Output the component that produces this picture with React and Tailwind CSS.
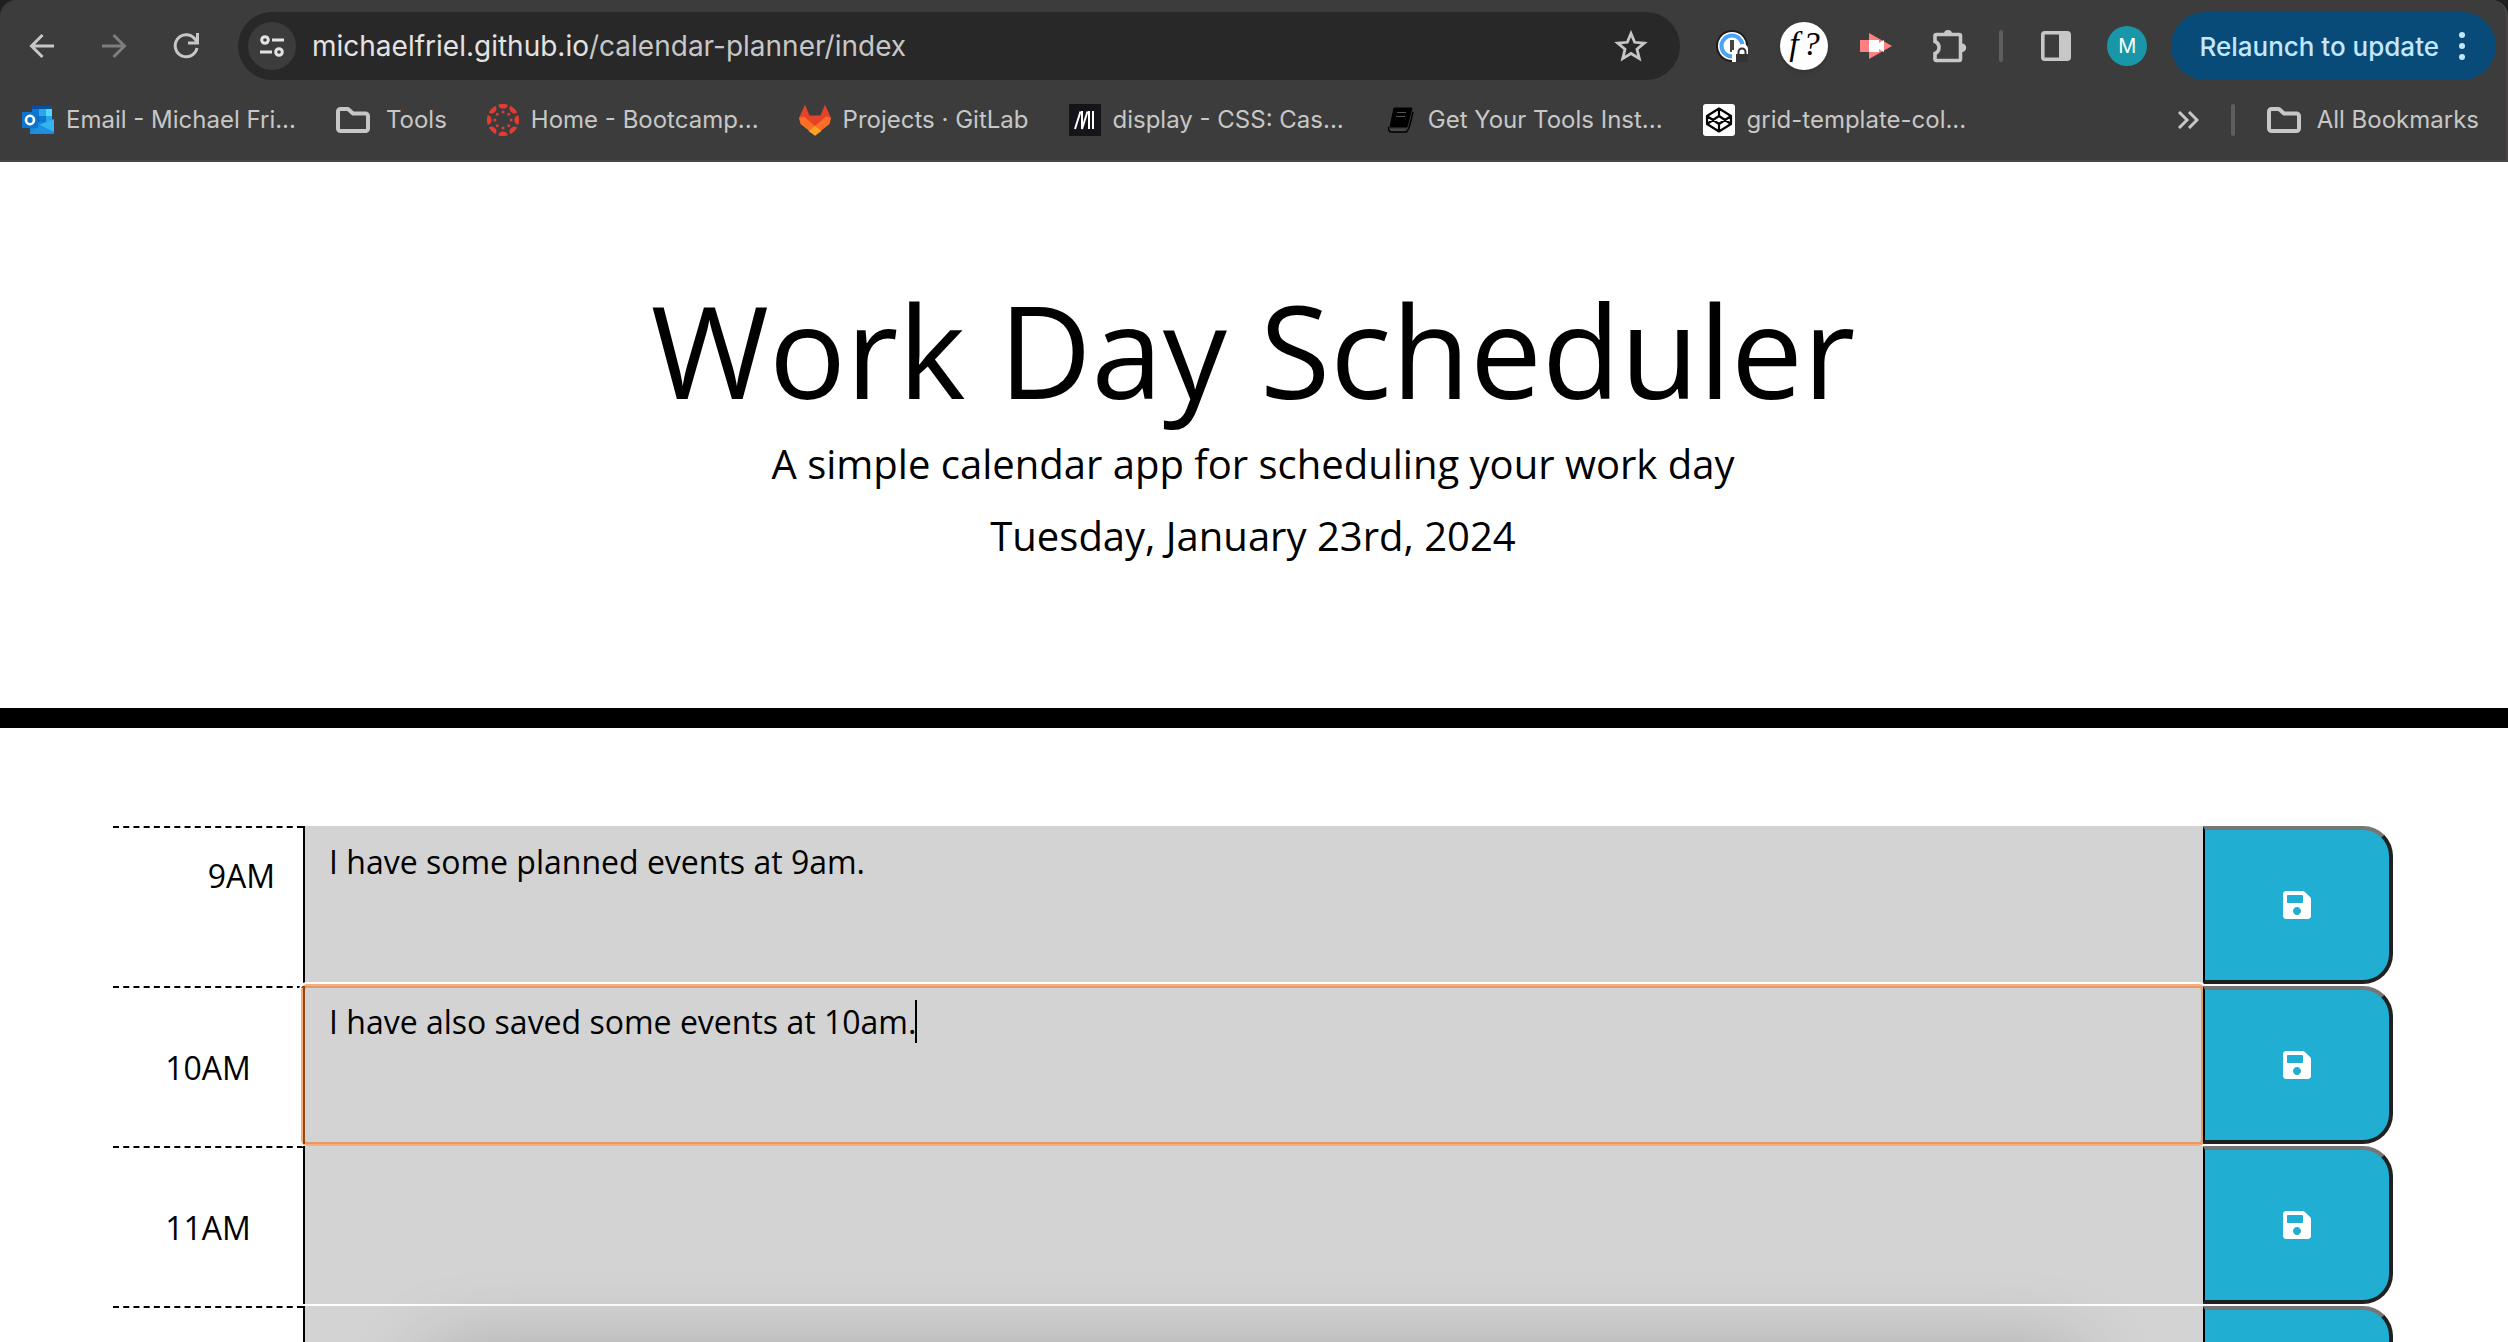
import React from "react";
import { FaSave } from "react-icons/fa";

const hours = [
  { id: "hour-9", label: "9AM", text: "I have some planned events at 9am.", first: true },
  { id: "hour-10", label: "10AM", text: "I have also saved some events at 10am.", focused: true },
  { id: "hour-11", label: "11AM", text: "" },
  { id: "hour-12", label: "", text: "" },
];

function FolderIcon() {
  return (
    <svg viewBox="0 0 34 26" className="h-[26px] w-[34px]" fill="none" stroke="currentColor" strokeWidth="4" strokeLinejoin="round">
      <path d="M2 4.5A2.5 2.5 0 0 1 4.500 2H12L17 6.500H29.500A2.500 2.500 0 0 1 32 9V21.500A2.500 2.500 0 0 1 29.500 24H4.500A2.500 2.500 0 0 1 2 21.500Z" />
    </svg>
  );
}

function OutlookIcon() {
  return (
    <svg viewBox="0 0 32 28" className="h-7 w-8">
      <path d="M10 0h20v16H10z" fill="#0a4fa0" />
      <path d="M10 3h7v7h-7z" fill="#0f78d4" />
      <path d="M17 3h7v7h-7z" fill="#28a8ea" />
      <path d="M24 3h6v7h-6z" fill="#50d9ff" />
      <path d="M10 10h7v7h-7z" fill="#0a5fb5" />
      <path d="M17 10h7v7h-7z" fill="#0f78d4" />
      <path d="M24 10h6v7h-6z" fill="#28a8ea" />
      <path d="M8 16h24v12H8z" fill="#1a86d9" />
      <path d="M32 13v13L17 19z" fill="#35b3f1" />
      <path d="M8 28l24-1-14-8z" fill="#1e90e0" />
      <rect x="0" y="6" width="16" height="16" rx="1" fill="#0f73d0" />
      <ellipse cx="8" cy="14" rx="4" ry="4.200" fill="none" stroke="#fff" strokeWidth="2.600" />
    </svg>
  );
}

function CanvasIcon() {
  const turns = [0, 45, 90, 135, 180, 225, 270, 315];
  return (
    <svg viewBox="0 0 32 32" className="size-8" fill="#e43b33">
      {turns.map((t) => (
        <g key={t} transform={`rotate(${t} 16 16)`}>
          <path d="M11.200.7A16 16 0 0 1 20.800.7A4.900 4.900 0 0 1 11.200.7Z" />
          <circle cx="16" cy="7.900" r="1.500" />
        </g>
      ))}
    </svg>
  );
}

function GitLabIcon() {
  return (
    <svg viewBox="0 0 32 32" className="size-8">
      <path d="M6 0.500 10.500 11.500H21.500L26 0.500 32 14 26 22 16 31 6 22 0 14Z" fill="#e24329" />
      <path d="M0 14 5 12.500 16 22 27 12.500 32 14 30.500 20 16 31.500 1.500 20Z" fill="#fc6d26" />
      <path d="M16 22 22.500 27 16 31.800 9.500 27Z" fill="#fca326" />
    </svg>
  );
}

function MdnIcon() {
  return (
    <svg viewBox="0 0 32 32" className="size-8">
      <path d="M0 0h32v32H0z" fill="#15141a" />
      <path d="M6 25 11.500 7.500M13 7V25L18.500 7.500M20 7V25M24 7V25" stroke="#fff" strokeWidth="2" fill="none" />
    </svg>
  );
}

function BookIcon() {
  return (
    <svg viewBox="0 0 32 32" className="size-8">
      <path d="M10 4h18l-5 19H6z" fill="#000" stroke="#000" strokeWidth="1" />
      <path d="M5 23c-1 2 0 5 2 5h15c3 0 5-12 7-20" fill="none" stroke="#000" strokeWidth="1.500" />
      <path d="M13 8.500h9M12 12.500h9M7 26h14" stroke="#555" strokeWidth="1.200" />
    </svg>
  );
}

function CodePenIcon() {
  return (
    <svg viewBox="0 0 32 32" className="size-8">
      <rect width="32" height="32" rx="3" fill="#fff" />
      <path d="M16 4.500 28 12v8l-12 7.500L4 20v-8ZM4 12l12 8 12-8M4 20l12-8 12 8M16 4.500v7.500M16 20v7.500" fill="none" stroke="#000" strokeWidth="2.200" strokeLinejoin="round" />
    </svg>
  );
}

const bookmarks = [
  { text: "Email - Michael Fri...", icon: <OutlookIcon /> },
  { text: "Tools", icon: <FolderIcon />, folder: true },
  { text: "Home - Bootcamp...", icon: <CanvasIcon /> },
  { text: "Projects · GitLab", icon: <GitLabIcon /> },
  { text: "display - CSS: Cas...", icon: <MdnIcon /> },
  { text: "Get Your Tools Inst...", icon: <BookIcon /> },
  { text: "grid-template-col...", icon: <CodePenIcon /> },
];

function Toolbar() {
  return (
    <div className="flex h-[92px] items-center pr-2.5 pl-6">
      <div className="flex gap-9 text-[#c7c7c7]">
        <button aria-label="Back" className="flex size-9 items-center justify-center">
          <svg viewBox="0 0 26 26" className="size-[26px]" fill="none" stroke="currentColor" strokeWidth="3"><path d="M25 13H3M13.500 2 2.500 13l11 11" /></svg>
        </button>
        <button aria-label="Forward" className="flex size-9 items-center justify-center text-[#7d7d7d]">
          <svg viewBox="0 0 26 26" className="size-[26px]" fill="none" stroke="currentColor" strokeWidth="3"><path d="M1 13h22M12.500 2l11 11-11 11" /></svg>
        </button>
        <button aria-label="Reload" className="flex size-9 items-center justify-center">
          <svg viewBox="0 0 26 26" className="size-[26px]" fill="none" stroke="currentColor" strokeWidth="3"><path d="M24 15A11 11 0 1 1 21.500 5.500L24 9" /><path d="M24.500 0v10H15" /></svg>
        </button>
      </div>
      <div className="ml-[34px] flex h-[68px] flex-1 items-center rounded-full bg-[#282828] pr-8 pl-2.5">
        <button aria-label="View site information" className="flex size-12 items-center justify-center rounded-full bg-[#3c3c3c]">
          <svg viewBox="0 0 24 22" className="h-[22px] w-6" fill="none" stroke="#e3e3e3" strokeWidth="3"><circle cx="5" cy="5" r="3.300" /><path d="M12 5h12M0 17h12" /><circle cx="19" cy="17" r="3.300" /></svg>
        </button>
        <div role="textbox" aria-label="Address" contentEditable suppressContentEditableWarning className="ml-4 flex-1 text-[28px] leading-9 text-[#c7c7c7] outline-none">
          <span className="text-[#e3e3e3]">michaelfriel.github.io</span>/calendar-planner/index
        </div>
        <button aria-label="Bookmark this tab">
          <svg viewBox="0 0 34 32" className="h-8 w-[34px]" fill="none" stroke="#c7c7c7" strokeWidth="2.800"><path d="m17 3.500 3.700 8.800 9.600.8-7.300 6.200 2.300 9.300L17 23.500l-8.300 5.100L11 19.300l-7.300-6.200 9.600-.8Z" /></svg>
        </button>
      </div>
      <div className="ml-9 flex items-center">
        <button aria-label="Password manager">
          <svg viewBox="0 0 32 32" className="size-8"><circle cx="16" cy="16" r="16" fill="#1c1c1c" /><circle cx="16" cy="16" r="14" fill="#fff" /><circle cx="16" cy="16" r="10.500" fill="none" stroke="#4aa3f5" strokeWidth="4" /><path d="M14 10h4v12h-4z" fill="#444" /><path d="M16 20h6a5 5 0 0 1 10-2v14H16z" fill="#fff" /><path d="M20 24h12v8H20z" fill="#333" /><path d="M22.500 25v-3a3.500 3.500 0 0 1 7 0v3" fill="none" stroke="#333" strokeWidth="2" /></svg>
        </button>
        <button aria-label="Font finder" className="ml-8 flex size-12 items-center justify-center gap-1 rounded-full bg-white pb-1 font-['Liberation_Serif',serif] text-[34px] leading-[44px] text-black italic shadow-md"><span>f</span><span>?</span></button>
        <button aria-label="Screen recorder" className="ml-8">
          <svg viewBox="0 0 32 26" className="h-[26px] w-8"><path d="M0 7h9V0l23 13L9 26v-7H0z" fill="#ff8080" /><path d="M9 7h10v3l5-3v12l-5-3v3H9z" fill="#fff" /></svg>
        </button>
        <button aria-label="Extensions" className="ml-[41px]">
          <svg viewBox="0 0 34 34" className="size-[34px]" fill="none" stroke="#c7c7c7" strokeWidth="3.600"><path d="M2 7a1.500 1.500 0 0 1 1.500-1.500H26A1.500 1.500 0 0 1 27.500 7V30A1.500 1.500 0 0 1 26 31.500H3.500A1.500 1.500 0 0 1 2 30V24.500A6.500 6.500 0 0 0 2 12.500Z" /><path d="M11 5a4 4 0 0 1 8 0ZM29 14.500a4.200 4.200 0 0 1 0 8.400Z" fill="#c7c7c7" stroke="none" /></svg>
        </button>
        <span className="ml-8 h-8 w-1 rounded-full bg-[#5e5e5e]" />
        <button aria-label="Side panel" className="ml-[38px]">
          <svg viewBox="0 0 30 30" className="size-[30px]"><rect x="1.800" y="1.800" width="26.400" height="26.400" rx="2" fill="none" stroke="#c7c7c7" strokeWidth="3.600" /><path d="M18 2h10v26H18z" fill="#c7c7c7" /></svg>
        </button>
        <button aria-label="Profile" className="ml-9 size-10 rounded-full bg-[#1997a8] text-xl leading-10 text-white">M</button>
        <button className="ml-6 flex h-[68px] items-center rounded-full bg-[#084b78] pr-[31px] pl-7 text-[26px] font-medium text-[#c2e7ff]">
          Relaunch to update
          <svg viewBox="0 0 6 30" className="ml-5 h-[30px] w-1.5" fill="currentColor"><circle cx="3" cy="4" r="3" /><circle cx="3" cy="15" r="3" /><circle cx="3" cy="26" r="3" /></svg>
        </button>
      </div>
    </div>
  );
}

function BookmarksBar() {
  return (
    <nav className="flex h-14 items-center pr-[27px] pl-[22px] text-2xl text-[#c7c7c7]">
      <div className="flex flex-1 gap-10">
        {bookmarks.map((b) => (
          <a key={b.text} href="#" className={b.folder ? "flex items-center gap-4 whitespace-nowrap" : "flex items-center gap-3 whitespace-nowrap"}>{b.icon}{b.text}</a>
        ))}
      </div>
      <button aria-label="More bookmarks">
        <svg viewBox="0 0 22 18" className="h-[18px] w-[22px]" fill="none" stroke="currentColor" strokeWidth="3"><path d="m2 1 8 8-8 8M12 1l8 8-8 8" /></svg>
      </button>
      <span className="mx-8 h-8 w-1 rounded-full bg-[#5e5e5e]" />
      <a href="#" className="flex items-center gap-4 whitespace-nowrap"><FolderIcon />All Bookmarks</a>
    </nav>
  );
}

function TimeBlock({ id, label, text, first, focused }) {
  return (
    <div className="mb-0.5 grid h-[158px] grid-cols-12">
      <label htmlFor={id} className={first ? "border-t-2 border-dashed border-black pt-6 pr-7 text-right leading-[48px]" : "flex items-center justify-center border-t-2 border-dashed border-black pt-1 leading-[48px]"}>{label}</label>
      <div className="relative col-span-10">
        <textarea id={id} defaultValue={text} className="block h-full w-full resize-none border-l-2 border-black bg-[#d3d3d3] px-6 py-3 leading-[48px] outline-none" />
        {focused && (
          <>
            <span className="pointer-events-none absolute -inset-0.5 rounded-md border-4 border-[#f27522]/60 ring-2 ring-white" />
            <span className="absolute top-[14px] left-[612px] h-[43px] w-0.5 bg-black" />
          </>
        )}
      </div>
      <button aria-label={`Save ${label}`} className="relative flex items-center justify-center rounded-r-[30px] border-4 border-l-2 border-t-[#767676] border-r-[#212121] border-b-[#212121] border-l-black bg-[#20aed3] text-white">
        <FaSave className="h-8 w-7" />
      </button>
    </div>
  );
}

export default function App() {
  return (
    <div className="relative h-screen overflow-hidden bg-white font-['Open_Sans',sans-serif] text-[32px] text-black">
      <div className="bg-[#202020] font-['Inter',sans-serif]">
        <div className="rounded-t-2xl border-r-2 border-b-2 border-[#4a4648] bg-[#3c3c3c] pb-3">
          <Toolbar />
          <BookmarksBar />
        </div>
      </div>
      <header className="border-b-[20px] border-black pt-[104px] pr-0.5 pb-[142px] text-center">
        <h1 className="text-[128px] leading-[168px]">Work Day Scheduler</h1>
        <p className="text-[40px] leading-[60px]">A simple calendar app for scheduling your work day</p>
        <p className="mt-3 text-[40px] leading-[60px]">Tuesday, January 23rd, 2024</p>
      </header>
      <main className="mt-[98px] pr-[115px] pl-[113px]">
        {hours.map((h) => <TimeBlock key={h.id} {...h} />)}
      </main>
      <div className="pointer-events-none absolute inset-x-[430px] -bottom-[210px] h-[200px] shadow-[0_0_80px_rgba(0,0,0,0.22)]" />
    </div>
  );
}
